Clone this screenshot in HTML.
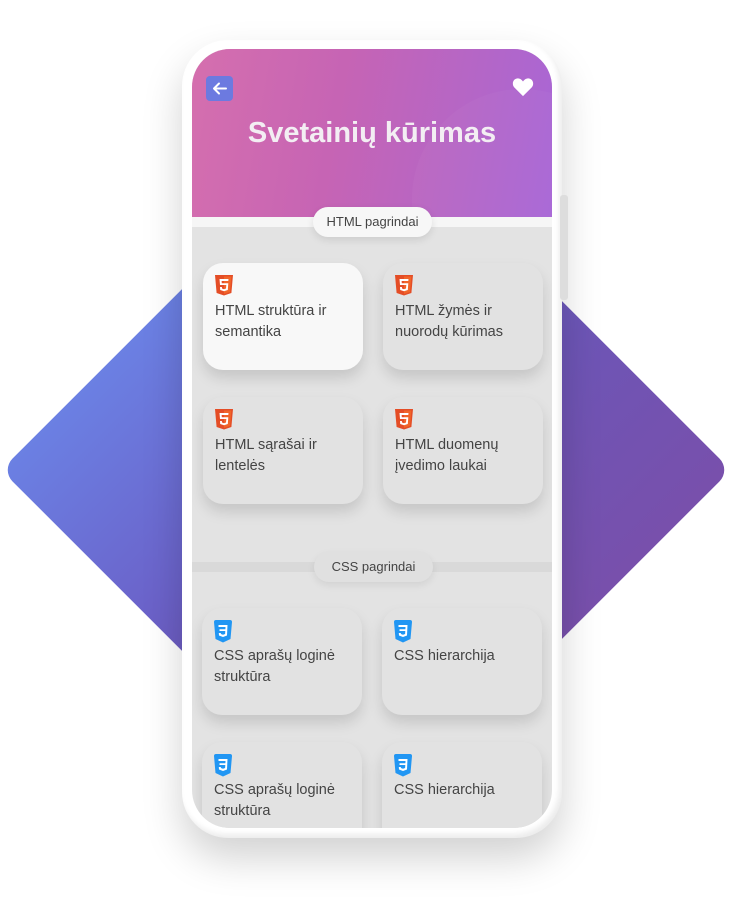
<!DOCTYPE html>
<html><head><meta charset="utf-8"><style>
*{margin:0;padding:0;box-sizing:border-box}
body{width:731px;height:916px;background:#fff;position:relative;overflow:hidden;font-family:"Liberation Sans",sans-serif}
.dia{position:absolute;left:108px;top:212px;width:516px;height:516px;transform:rotate(45deg);border-radius:16px;background:linear-gradient(to right,#6b80e3,#6b62c9 40%,#6d55b6 60%,#7850ac)}
.phone{position:absolute;left:182px;top:40px;width:380px;height:798px;background:#fff;border-radius:46px;box-shadow:0 20px 40px rgba(0,0,0,.18),inset -3px -4px 6px rgba(0,0,0,.08)}
.btn{position:absolute;left:560px;top:195px;width:8px;height:105px;background:#ddd;border-radius:3px}
.screen{position:absolute;left:192px;top:49px;width:360px;height:779px;border-radius:38px;overflow:hidden;background:#e3e3e3}
.hdr{position:absolute;left:0;top:0;width:360px;height:168px;background:linear-gradient(100deg,#d56fae,#c664b4 40%,#b466c7 75%,#a866d6)}
.blob{position:absolute;border-radius:50%;background:rgba(255,255,255,.03)}
.back{position:absolute;left:14px;top:27px;width:27px;height:25px;background:#6c7ae0;border-radius:4px}
h1{position:absolute;left:0;top:68px;width:360px;text-align:center;color:#f3eef3;font-size:29px;font-weight:bold;letter-spacing:0}
.strip{position:absolute;left:0;height:10px;width:360px}
.pill{position:absolute;height:30px;border-radius:15px;font-size:13px;color:#444;text-align:center;line-height:30px}
.card{position:absolute;width:160px;height:107px;border-radius:20px;background:#e2e2e2;box-shadow:0 8px 14px rgba(0,0,0,.13)}
.card .t{position:absolute;left:12px;top:38px;font-size:14.5px;line-height:21px;color:#444;width:145px}
.card svg{position:absolute;left:12px;top:12px}
</style></head><body>
<div class="dia"></div>
<div class="phone"></div>
<div class="btn"></div>
<div class="screen">
 <div class="hdr">
  <div class="blob" style="left:220px;top:40px;width:220px;height:220px"></div>
  <div class="back"><svg width="27" height="25" viewBox="0 0 27 25"><path d="M20 12.5H8M13 7.5L8 12.5L13 17.5" stroke="#fff" stroke-width="2" fill="none" stroke-linecap="round" stroke-linejoin="round"/></svg></div>
  <svg style="position:absolute;left:320px;top:28px" width="22" height="20" viewBox="0 0 24 22"><path d="M12 21L2.5 11.5C-0.5 8.5 0.5 2 6 1.5C9 1.3 11 3.5 12 5C13 3.5 15 1.3 18 1.5C23.5 2 24.5 8.5 21.5 11.5Z" fill="#fff"/></svg>
  <h1>Svetainių kūrimas</h1>
 </div>
 <div class="strip" style="top:168px;background:#f6f6f6"></div>
 <div class="pill" style="left:121px;top:158px;width:119px;background:#f7f7f7;box-shadow:0 3px 8px rgba(0,0,0,.1)">HTML pagrindai</div>
 <div class="strip" style="top:513px;background:#d9d9d9"></div>
 <div class="pill" style="left:122px;top:503px;width:119px;background:#e0e0e0;box-shadow:0 3px 8px rgba(0,0,0,.08)">CSS pagrindai</div>
</div>
<div style="position:absolute;left:192px;top:49px;width:360px;height:779px;border-radius:38px;overflow:hidden">
 <div class="card" style="left:11px;top:214px;background:#f8f8f8"><svg width="18" height="21" viewBox="0 0 18 21"><path d="M0 0H18L16.4 18L9 20.5L1.6 18Z" fill="#e44d26"/><path d="M9 1.5H16.4L15 17L9 19Z" fill="#f16529"/><path d="M13.5 4H4.5L5 10H11.3L11 13.5L9 14.2L7 13.5L6.9 12H5L5.2 15L9 16.3L12.8 15L13.3 8.3H6.8L6.6 6H13.3Z" fill="#fff"/></svg><div class="t">HTML struktūra ir semantika</div></div>
 <div class="card" style="left:191px;top:214px"><svg width="18" height="21" viewBox="0 0 18 21"><path d="M0 0H18L16.4 18L9 20.5L1.6 18Z" fill="#e44d26"/><path d="M9 1.5H16.4L15 17L9 19Z" fill="#f16529"/><path d="M13.5 4H4.5L5 10H11.3L11 13.5L9 14.2L7 13.5L6.9 12H5L5.2 15L9 16.3L12.8 15L13.3 8.3H6.8L6.6 6H13.3Z" fill="#fff"/></svg><div class="t">HTML žymės ir nuorodų kūrimas</div></div>
 <div class="card" style="left:11px;top:348px"><svg width="18" height="21" viewBox="0 0 18 21"><path d="M0 0H18L16.4 18L9 20.5L1.6 18Z" fill="#e44d26"/><path d="M9 1.5H16.4L15 17L9 19Z" fill="#f16529"/><path d="M13.5 4H4.5L5 10H11.3L11 13.5L9 14.2L7 13.5L6.9 12H5L5.2 15L9 16.3L12.8 15L13.3 8.3H6.8L6.6 6H13.3Z" fill="#fff"/></svg><div class="t">HTML sąrašai ir lentelės</div></div>
 <div class="card" style="left:191px;top:348px"><svg width="18" height="21" viewBox="0 0 18 21"><path d="M0 0H18L16.4 18L9 20.5L1.6 18Z" fill="#e44d26"/><path d="M9 1.5H16.4L15 17L9 19Z" fill="#f16529"/><path d="M13.5 4H4.5L5 10H11.3L11 13.5L9 14.2L7 13.5L6.9 12H5L5.2 15L9 16.3L12.8 15L13.3 8.3H6.8L6.6 6H13.3Z" fill="#fff"/></svg><div class="t">HTML duomenų įvedimo laukai</div></div>
 <div class="card" style="left:10px;top:559px"><svg width="18" height="23" viewBox="0 0 18 23"><path d="M0 2Q0 0 2 0H16Q18 0 18 2L16.5 19L9 22.5L1.5 19Z" fill="#2196f3"/><path d="M4.5 5H13.5L13 15.5L9 17L5 15.5L4.8 13H6.8L6.9 14L9 14.8L11.1 14L11.3 11H5.5V9.3H11.4L11.5 7H4.5Z" fill="#fff"/></svg><div class="t">CSS aprašų loginė struktūra</div></div>
 <div class="card" style="left:190px;top:559px"><svg width="18" height="23" viewBox="0 0 18 23"><path d="M0 2Q0 0 2 0H16Q18 0 18 2L16.5 19L9 22.5L1.5 19Z" fill="#2196f3"/><path d="M4.5 5H13.5L13 15.5L9 17L5 15.5L4.8 13H6.8L6.9 14L9 14.8L11.1 14L11.3 11H5.5V9.3H11.4L11.5 7H4.5Z" fill="#fff"/></svg><div class="t">CSS hierarchija</div></div>
 <div class="card" style="left:10px;top:693px"><svg width="18" height="23" viewBox="0 0 18 23"><path d="M0 2Q0 0 2 0H16Q18 0 18 2L16.5 19L9 22.5L1.5 19Z" fill="#2196f3"/><path d="M4.5 5H13.5L13 15.5L9 17L5 15.5L4.8 13H6.8L6.9 14L9 14.8L11.1 14L11.3 11H5.5V9.3H11.4L11.5 7H4.5Z" fill="#fff"/></svg><div class="t">CSS aprašų loginė struktūra</div></div>
 <div class="card" style="left:190px;top:693px"><svg width="18" height="23" viewBox="0 0 18 23"><path d="M0 2Q0 0 2 0H16Q18 0 18 2L16.5 19L9 22.5L1.5 19Z" fill="#2196f3"/><path d="M4.5 5H13.5L13 15.5L9 17L5 15.5L4.8 13H6.8L6.9 14L9 14.8L11.1 14L11.3 11H5.5V9.3H11.4L11.5 7H4.5Z" fill="#fff"/></svg><div class="t">CSS hierarchija</div></div>
</div>
</body></html>
